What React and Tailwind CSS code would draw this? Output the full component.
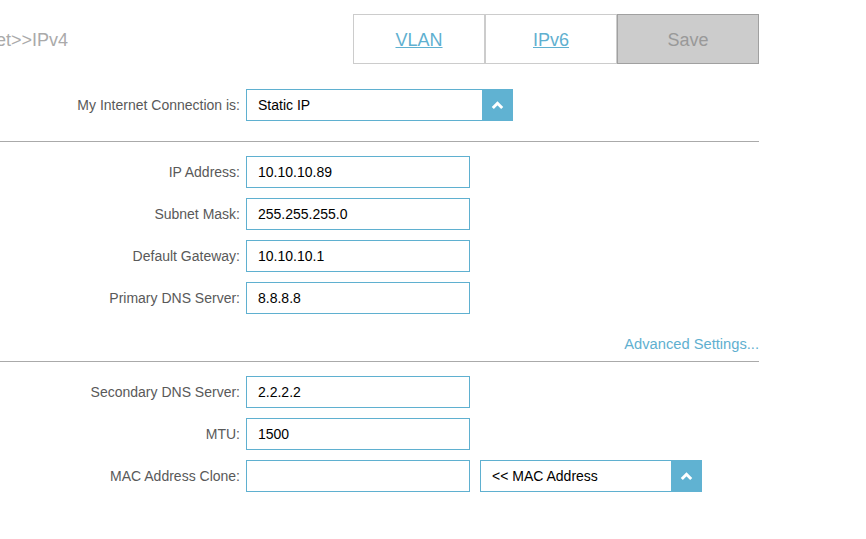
import React from 'react';

const labelCls = 'w-[246px] pr-[6px] text-right text-[14px] text-[#595959]';
const boxCls = 'h-[32px] border border-[#5fb0d0] bg-white flex items-center pl-[11px] text-[14px] text-black';

const Chevron = () => (
  <svg width="13" height="9" viewBox="0 0 13 9">
    <polyline points="1.8,7 6.5,2.3 11.2,7" fill="none" stroke="white" strokeWidth="3" />
  </svg>
);

const SelectBox = ({ value, width }) => (
  <div className={`flex h-[32px] border border-[#5fb0d0] bg-white ${width}`}>
    <div className="flex-1 flex items-center pl-[11px] text-[14px] text-black">{value}</div>
    <div className="w-[31px] bg-[#60b2d2] flex items-center justify-center -my-px -mr-px">
      <Chevron />
    </div>
  </div>
);

const Row = ({ label, value, children }) => (
  <div className="flex items-center h-[32px]">
    <div className={labelCls}>{label}</div>
    <div className={`${boxCls} w-[224px]`}>{value}</div>
    {children}
  </div>
);

export default function App() {
  return (
    <div
      className="w-[866px] h-[539px] bg-white overflow-hidden"
      style={{ fontFamily: '"Liberation Sans", Arial, sans-serif' }}
    >
      <div className="w-[759px]">
        {/* header */}
        <div className="flex items-center pt-[14px]">
          <div className="w-[68px] overflow-hidden flex justify-end whitespace-nowrap text-[18px] text-[#aaaaaa] mt-[3px]">
            Internet&gt;&gt;IPv4
          </div>
          <div className="flex-1" />
          <div className="flex h-[50px]">
            <div className="w-[132px] border border-[#cccccc] flex items-center justify-center pt-[3px] text-[18px] text-[#5fb0d0] underline">
              VLAN
            </div>
            <div className="w-[132px] border border-[#cccccc] flex items-center justify-center pt-[3px] text-[18px] text-[#5fb0d0] underline">
              IPv6
            </div>
            <div className="w-[142px] border border-[#a0a0a0] bg-[#cccccc] flex items-center justify-center pt-[3px] text-[18px] text-[#999999]">
              Save
            </div>
          </div>
        </div>

        <div className="flex items-center mt-[25px]">
          <div className={labelCls}>My Internet Connection is:</div>
          <SelectBox value="Static IP" width="w-[267px]" />
        </div>

        <div className="mt-[20px] h-px bg-[#aaaaaa]" />

        <div className="mt-[14px] flex flex-col gap-[10px]">
          <Row label="IP Address:" value="10.10.10.89" />
          <Row label="Subnet Mask:" value="255.255.255.0" />
          <Row label="Default Gateway:" value="10.10.10.1" />
          <Row label="Primary DNS Server:" value="8.8.8.8" />
        </div>

        <div className="mt-[21px] text-right text-[14.7px] leading-[18px] text-[#5fb0d0]">Advanced Settings...</div>
        <div className="mt-[8px] h-px bg-[#aaaaaa]" />

        <div className="mt-[14px] flex flex-col gap-[10px]">
          <Row label="Secondary DNS Server:" value="2.2.2.2" />
          <Row label="MTU:" value="1500" />
          <Row label="MAC Address Clone:" value="">
            <div className="ml-[10px]">
              <SelectBox value="<< MAC Address" width="w-[222px]" />
            </div>
          </Row>
        </div>
      </div>
    </div>
  );
}
